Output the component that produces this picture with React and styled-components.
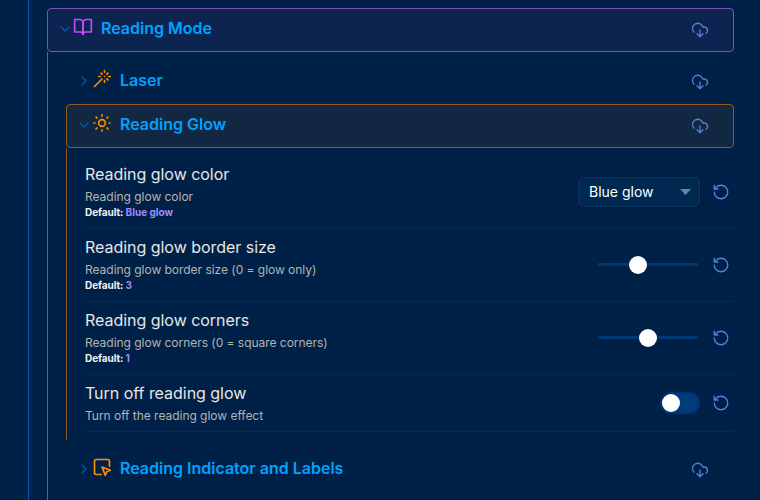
import React from "react";
import styled, { createGlobalStyle, css } from "styled-components";

const GlobalStyle = createGlobalStyle`
  * { box-sizing: border-box; }
  body {
    margin: 0;
    background: #002147;
    color: #dadada;
    font-family: Inter, "Liberation Sans", sans-serif;
    overflow: hidden;
  }
`;

const Page = styled.main`
  width: 760px;
  height: 500px;
  overflow: hidden;
  padding: 0 26px 0 28px;
`;

const Branch = styled.div`
  border-left: 1px solid ${(p) => p.$color};
  padding-left: 18px;
`;

const Root = styled(Branch)`
  height: 500px;
  padding-top: 8px;
`;

const ModeBranch = styled(Branch)`
  height: 448px;
  padding-top: 8px;
`;

const GlowBranch = styled(Branch)`
  height: 292px;
  padding-top: 8px;
  margin-bottom: 8px;
`;

const Header = styled.div`
  display: flex;
  align-items: flex-start;
  height: 44px;
  padding: 9px 24px 0 9px;
  border: 1px solid transparent;
  border-radius: 4px;
  ${(p) =>
    p.$line &&
    css`
      border-color: ${p.$line};
      background: ${p.$fill};
    `}
`;

const Title = styled.h2`
  flex: 1;
  margin: 0 0 0 8px;
  font-size: 16px;
  line-height: 20px;
  font-weight: 600;
  color: #00a2ff;
`;

const Svg = styled.svg`
  display: block;
  flex: none;
  width: ${(p) => p.$size}px;
  height: ${(p) => p.$size}px;
  fill: none;
  stroke: ${(p) => p.$color};
  stroke-width: ${(p) => p.$stroke || 1.75};
  stroke-linecap: round;
  stroke-linejoin: round;
`;

const Chevron = styled(Svg)`
  margin-top: 3px;
`;

const Kind = styled(Svg)`
  margin: -1px 0 0;
`;

const Cloud = styled(Svg)`
  margin-top: 3px;
`;

const Row = styled.div`
  display: flex;
  align-items: center;
  justify-content: space-between;
  height: ${(p) => (p.$short ? 57 : 73)}px;
  border-bottom: 1px solid #002b5e;
`;

const Name = styled.div`
  font-size: 16px;
  line-height: 21px;
  letter-spacing: -0.03px;
  color: #e6e6e6;
`;

const Description = styled.div`
  margin-top: 4px;
  font-size: 12px;
  line-height: 16px;
  letter-spacing: -0.03px;
  color: #b3b3b3;
`;

const Default = styled.div`
  font-size: 10px;
  line-height: 15px;
  font-weight: 700;
  letter-spacing: -0.07px;
  color: #f2f2f2;
`;

const Value = styled.span`
  letter-spacing: 0;
  color: #a28bff;
`;

const Controls = styled.div`
  display: flex;
  align-items: center;
  gap: 12px;
  padding-right: 4px;
`;

const Select = styled.button`
  display: flex;
  align-items: center;
  justify-content: space-between;
  width: 122px;
  height: 30px;
  padding: 0 8px 0 10px;
  border: 1px solid #10345b;
  border-radius: 5px;
  background: #002952;
  box-shadow: 0 1px 3px rgba(0, 0, 0, 0.3);
  color: #fff;
  font: 400 14px/20px Inter, sans-serif;
`;

const Caret = styled.span`
  width: 11px;
  height: 6px;
  background: #738297;
  clip-path: polygon(0 0, 100% 0, 50% 100%);
`;

const Slider = styled.div`
  display: flex;
  align-items: center;
  width: 100px;
  height: 18px;
  margin-right: 2px;
  background: linear-gradient(#003873, #003873) 0 7px / 100% 3px no-repeat;
`;

const Knob = styled.span`
  flex: none;
  width: 18px;
  height: 18px;
  border-radius: 50%;
  background: #fff;
`;

const SliderKnob = styled(Knob)`
  margin-left: ${(p) => p.$at}px;
  box-shadow: 0 1px 2px rgba(0, 0, 0, 0.25);
`;

const Toggle = styled.div`
  display: flex;
  align-items: center;
  width: 40px;
  height: 22px;
  padding-left: 2px;
  border-radius: 11px;
  background: #003b7a;
  box-shadow: inset 0 0 3px rgba(0, 20, 50, 0.5);
`;

const kinds = {
  book: (
    <>
      <path d="M2 3h6a4 4 0 0 1 4 4v14a3 3 0 0 0-3-3H2z" />
      <path d="M22 3h-6a4 4 0 0 0-4 4v14a3 3 0 0 1 3-3h7z" />
    </>
  ),
  wand: (
    <path d="M15 4V2M15 16v-2M8 9h2M20 9h2M17.8 11.8 19 13M15 9h.01M17.8 6.2 19 5M3 21l9-9M12.2 6.2 11 5" />
  ),
  sun: (
    <>
      <circle cx="12" cy="12" r="4" />
      <path d="M12 2.3v1.2M12 20.5v1.2M4.93 4.93l1.1 1.1M17.97 17.97l1.1 1.1M2.3 12h1.2M20.5 12h1.2M6.03 17.97l-1.1 1.1M19.07 4.93l-1.1 1.1" />
    </>
  ),
  pointer: (
    <>
      <path d="M21 11V5a2 2 0 0 0-2-2H5a2 2 0 0 0-2 2v14a2 2 0 0 0 2 2h6" />
      <path d="m12 12 4 10 1.7-4.3L22 16Z" />
    </>
  ),
};

function Heading({ icon, color, title, open, line, fill }) {
  return (
    <Header $line={line} $fill={fill}>
      <Chevron viewBox="0 0 24 24" $size={16} $stroke={1.6} $color="#005db4">
        <path d={open ? "m6 9 6 6 6-6" : "m9 18 6-6-6-6"} />
      </Chevron>
      <Kind viewBox="0 0 24 24" $size={20} $stroke={2} $color={color}>
        {kinds[icon]}
      </Kind>
      <Title>{title}</Title>
      <Cloud viewBox="0 0 24 24" $size={18} $color="#5381d6">
        <path d="M4 14.899A7 7 0 1 1 15.71 8h1.79a4.5 4.5 0 0 1 2.5 8.242M12 12v9M8 17l4 4 4-4" />
      </Cloud>
    </Header>
  );
}

function Setting({ name, description, value, children }) {
  return (
    <Row $short={value === undefined}>
      <div>
        <Name>{name}</Name>
        <Description>{description}</Description>
        {value !== undefined && (
          <Default>
            Default: <Value>{value}</Value>
          </Default>
        )}
      </div>
      <Controls>
        {children}
        <Svg viewBox="0 0 24 24" $size={18} $color="#5381d6">
          <path d="M3 12a9 9 0 1 0 9-9 9.75 9.75 0 0 0-6.74 2.74L3 8M3 3v5h5" />
        </Svg>
      </Controls>
    </Row>
  );
}

export default function App() {
  return (
    <Page>
      <GlobalStyle />
      <Root $color="#0055b3">
        <Heading icon="book" color="#c847ff" title="Reading Mode" open line="#8250b4" fill="#0d2451" />
        <ModeBranch $color="#7c4fae">
          <Heading icon="wand" color="#ff8c00" title="Laser" />
          <Heading icon="sun" color="#ff8c00" title="Reading Glow" open line="#96581e" fill="#122842" />
          <GlowBranch $color="#96581e">
            <Setting name="Reading glow color" description="Reading glow color" value="Blue glow">
              <Select>
                Blue glow
                <Caret />
              </Select>
            </Setting>
            <Setting name="Reading glow border size" description="Reading glow border size (0 = glow only)" value="3">
              <Slider>
                <SliderKnob $at={31} />
              </Slider>
            </Setting>
            <Setting name="Reading glow corners" description="Reading glow corners (0 = square corners)" value="1">
              <Slider>
                <SliderKnob $at={41} />
              </Slider>
            </Setting>
            <Setting name="Turn off reading glow" description="Turn off the reading glow effect">
              <Toggle>
                <Knob />
              </Toggle>
            </Setting>
          </GlowBranch>
          <Heading icon="pointer" color="#ff8c00" title="Reading Indicator and Labels" />
        </ModeBranch>
      </Root>
    </Page>
  );
}
